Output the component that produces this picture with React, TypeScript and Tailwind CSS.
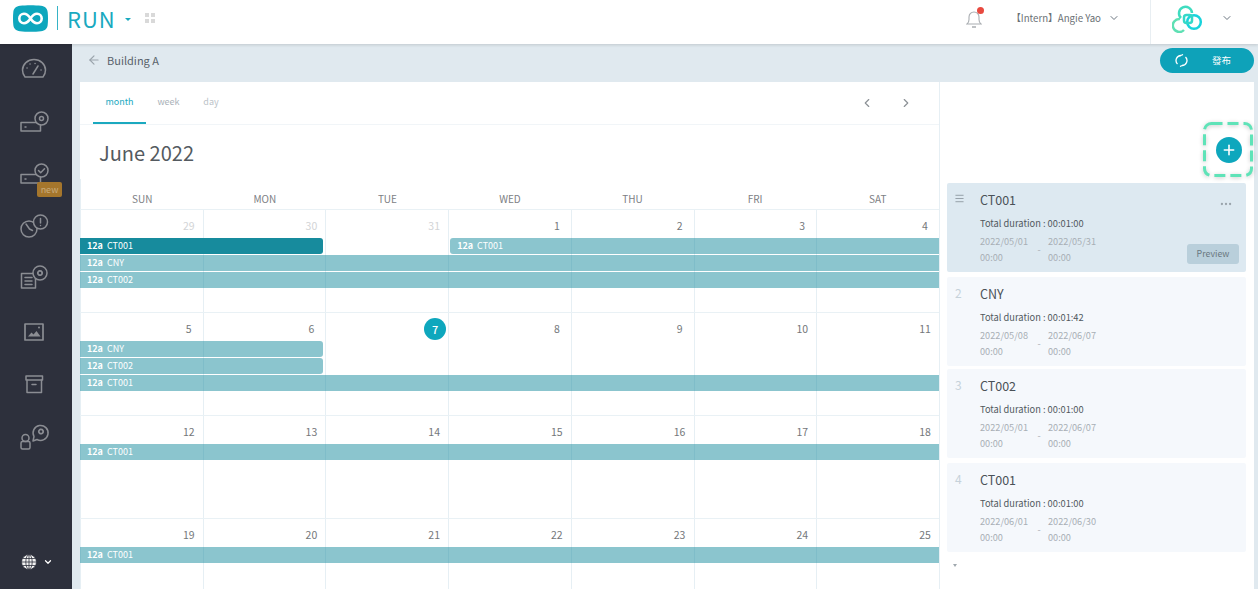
import { ChevronDown, ChevronLeft, ChevronRight, ArrowLeft, Plus, Ellipsis, Menu } from 'lucide-react';
import type { ReactNode } from 'react';

const FONT = 'font-["Noto_Sans_CJK_TC","Noto_Sans",sans-serif]';

const Ico = ({ children }: { children: ReactNode }) => (
  <svg width="32" height="32" viewBox="0 0 32 32" fill="none" stroke="#8b8d93" strokeWidth="1.5" strokeLinecap="round" strokeLinejoin="round">
    {children}
  </svg>
);

const Gear = ({ cx, cy, r = 7 }: { cx: number; cy: number; r?: number }) => (
  <>
    <circle cx={cx} cy={cy} r={r} fill="#2d303c" />
    <circle cx={cx} cy={cy} r={2.2} strokeWidth="1.8" strokeDasharray="1.6 0.6" />
  </>
);

const NAV_ICONS = [
  <Ico key="gauge">
    <path d="M7 24a11 11 0 0 1-2.500-7 11.500 10.500 0 0 1 23 0 11 11 0 0 1-2.500 7z" />
    <path d="M15 21l5-8M9 15h.1M12 11h.1M17 10.500h.1M23 17h.1" />
  </Ico>,
  <Ico key="device">
    <rect x="3" y="16.500" width="19.500" height="8.500" />
    <path d="M7 21h1" />
    <circle cx="23.500" cy="12.500" r="6.500" fill="#2d303c" />
    <circle cx="23.500" cy="12.500" r="2" />
  </Ico>,
  <Ico key="check">
    <rect x="3" y="16.500" width="19.500" height="8.500" />
    <path d="M7 21h1" />
    <circle cx="23.500" cy="12.500" r="6.500" fill="#2d303c" />
    <path d="M20.500 12.500l2.200 2.200 3.800-4" />
  </Ico>,
  <Ico key="alert">
    <circle cx="11" cy="18" r="8" />
    <path d="M8 13l3.500 5 3 1.500" />
    <circle cx="22.500" cy="11" r="7" fill="#2d303c" />
    <path d="M22.500 7.500v4.500M22.500 14.500v.1" />
  </Ico>,
  <Ico key="list">
    <rect x="3.500" y="10.500" width="14" height="14.500" fill="#2d303c" />
    <path d="M7 14.500h7M7 18h7M7 21.500h7" />
    <Gear cx={22} cy={10} />
  </Ico>,
  <Ico key="image">
    <rect x="7" y="8" width="18" height="16" strokeWidth="1.700" />
    <path d="M10 20.500l3.500-4 2 2 3-3.500 4 5.500z" fill="#8b8d93" stroke="none" />
    <circle cx="21" cy="11.500" r="1" fill="#8b8d93" stroke="none" />
  </Ico>,
  <Ico key="archive">
    <rect x="8" y="8" width="16.500" height="4" />
    <path d="M9 12v12.500h14.500V12M14 16.500h4" />
  </Ico>,
  <Ico key="user">
    <circle cx="7.500" cy="17" r="3.500" />
    <rect x="3" y="20.500" width="9" height="7.500" rx="1.500" />
    <path d="M16 15.500a7.500 7.500 0 1 1 3 3l-4 1.500z" />
    <circle cx="23" cy="10.500" r="2.200" strokeDasharray="1.600 0.600" strokeWidth="1.800" />
  </Ico>,
];

const DAYS = ['SUN', 'MON', 'TUE', 'WED', 'THU', 'FRI', 'SAT'];
const COL_STARTS = ['col-start-1', 'col-start-2', 'col-start-3', 'col-start-4', 'col-start-5', 'col-start-6', 'col-start-7'];

type CalEvent = { name: string; pos: string; round?: string; dark?: boolean };

const WEEKS: { dates: number[]; muted: number[]; today?: number; events: CalEvent[] }[] = [
  {
    dates: [29, 30, 31, 1, 2, 3, 4],
    muted: [29, 30, 31],
    events: [
      { name: 'CT001', pos: 'row-start-2 col-start-1 col-span-2', round: 'rounded-r-[3px] mr-[2px]', dark: true },
      { name: 'CT001', pos: 'row-start-2 col-start-4 col-span-4', round: 'rounded-l-[3px] ml-[2px]' },
      { name: 'CNY', pos: 'row-start-3 col-start-1 col-span-7' },
      { name: 'CT002', pos: 'row-start-4 col-start-1 col-span-7' },
    ],
  },
  {
    dates: [5, 6, 7, 8, 9, 10, 11],
    muted: [],
    today: 7,
    events: [
      { name: 'CNY', pos: 'row-start-2 col-start-1 col-span-2', round: 'rounded-r-[3px] mr-[2px]' },
      { name: 'CT002', pos: 'row-start-3 col-start-1 col-span-2', round: 'rounded-r-[3px] mr-[2px]' },
      { name: 'CT001', pos: 'row-start-4 col-start-1 col-span-7' },
    ],
  },
  {
    dates: [12, 13, 14, 15, 16, 17, 18],
    muted: [],
    events: [{ name: 'CT001', pos: 'row-start-2 col-start-1 col-span-7' }],
  },
  {
    dates: [19, 20, 21, 22, 23, 24, 25],
    muted: [],
    events: [{ name: 'CT001', pos: 'row-start-2 col-start-1 col-span-7' }],
  },
];

const CARDS = [
  { no: 1, name: 'CT001', dur: '00:01:00', from: '2022/05/01', to: '2022/05/31', active: true, gap: '' },
  { no: 2, name: 'CNY', dur: '00:01:42', from: '2022/05/08', to: '2022/06/07', gap: 'mt-[5px]' },
  { no: 3, name: 'CT002', dur: '00:01:00', from: '2022/05/01', to: '2022/06/07', gap: 'mt-[3px]' },
  { no: 4, name: 'CT001', dur: '00:01:00', from: '2022/06/01', to: '2022/06/30', gap: 'mt-[5px]' },
];

function Header() {
  return (
    <header className="relative z-10 flex h-[44px] shrink-0 items-stretch bg-white shadow-[0_1px_3px_rgba(0,0,0,0.14)]">
      <div className="flex items-center pb-[8px]">
        <svg className="ml-[13px]" width="35" height="27" viewBox="0 0 35 27">
          <path d="M7 .8C13 0 22 0 28 .8c4 .5 6.500 2.700 6.700 6.500.4 4 .4 8.400 0 12.400-.2 3.800-2.700 6-6.700 6.500-6 .8-15 .8-21 0-4-.5-6.500-2.700-6.700-6.500-.4-4-.4-8.400 0-12.400C.5 3.500 3 1.300 7 .8z" fill="#0ea7bd" />
          <path d="M17.500 13.500c-2-3-4-4.700-6.500-4.700a4.700 4.700 0 0 0 0 9.400c2.500 0 4.500-1.700 6.500-4.700 2-3 4-4.700 6.500-4.700a4.700 4.700 0 0 1 0 9.400c-2.500 0-4.500-1.700-6.500-4.700z" fill="none" stroke="#fff" strokeWidth="2.600" />
        </svg>
        <div className="ml-[9px] h-[24px] w-px bg-[#36b3c6]" />
        <span className="ml-[9px] text-[22px] leading-none font-normal tracking-[1px] text-[#1aa9bf]">RUN</span>
        <span className="mt-[3px] ml-[9px] h-0 w-0 border-x-[3.5px] border-t-[3.5px] border-x-transparent border-t-[#1aa9bf]" />
        <div className="ml-[14px] grid grid-cols-2 gap-[1.500px]">
          <span className="h-[4.500px] w-[4.500px] bg-[#d9d9d9]" />
          <span className="h-[4.500px] w-[4.500px] bg-[#d9d9d9]" />
          <span className="h-[4.500px] w-[4.500px] bg-[#d9d9d9]" />
          <span className="h-[4.500px] w-[4.500px] bg-[#d9d9d9]" />
        </div>
      </div>

      <div className="ml-auto flex items-center pb-[8px]">
        <div className="relative mt-[1px] h-[20px] w-[16px]">
          <svg width="16" height="20" viewBox="0 0 16 20" fill="none" stroke="#a9adb1" strokeWidth="1.100">
            <path d="M1 15h14c-1.500-1-2-2.500-2-4.500V8a5 5 0 0 0-10 0v2.500C3 12.500 2.500 14 1 15z" />
            <path d="M6 18h4" strokeWidth="1.500" />
          </svg>
          <span className="absolute -top-[2px] right-[-2px] h-[7px] w-[7px] rounded-full bg-[#e8493f]" />
        </div>
        <span className="ml-[29px] w-[90px] text-right text-[9.700px] whitespace-nowrap text-[#6b7075]">【Intern】Angie Yao</span>
        <ChevronDown className="ml-[7px]" size={12} color="#6b7580" />
      </div>
      <div className="ml-[30px] h-full w-px bg-[#e8eef2]" />
      <div className="flex items-center pb-[8px]">
        <svg className="ml-[21px]" width="31" height="29" viewBox="0 0 31 29" fill="none" strokeWidth="2.500">
          <path d="M8 15a6.500 6.500 0 1 0 4 11" stroke="#5fe0b4" />
          <path d="M9 14a6.500 6.500 0 1 1 11-5" stroke="#3fdcc0" />
          <circle cx="22" cy="18" r="6.800" stroke="#18d3dc" />
          <rect x="12" y="11" width="8" height="8" rx="2.500" stroke="#35d8c8" />
        </svg>
        <ChevronDown className="ml-[18px]" size={12} color="#6b7580" />
        <div className="w-[25px]" />
      </div>
    </header>
  );
}

function Sidebar() {
  return (
    <aside className="flex w-[72px] shrink-0 flex-col items-center bg-[#2d303c]">
      <div className="-mt-px flex flex-col items-center">
        {NAV_ICONS.map((icon, i) => (
          <div key={i} className="relative flex h-[52.500px] w-[72px] items-center justify-center pr-[4px]">
            {icon}
            {i === 2 && (
              <span className="absolute top-[34px] left-[37px] flex h-[15px] w-[25px] items-center justify-center rounded-[2px] bg-[#a5762c] text-[9px] text-[#c9ac7c]">new</span>
            )}
          </div>
        ))}
      </div>
      <div className="mt-auto mb-[19px] flex items-center gap-[6px] pl-[1px]">
        <svg width="16" height="16" viewBox="0 0 16 16" fill="#f2f2f2" stroke="#2d303c" strokeWidth="0.8">
          <circle cx="8" cy="8" r="7.500" />
          <ellipse cx="8" cy="8" rx="3.200" ry="7.300" fill="none" />
          <path d="M8 .7v14.600M.7 8h14.600M1.700 4.500h12.600M1.700 11.500h12.600" fill="none" />
        </svg>
        <ChevronDown size={10} color="#fff" strokeWidth={3} />
      </div>
    </aside>
  );
}

function Calendar() {
  return (
    <section className="flex w-[860px] shrink-0 flex-col border-r border-[#e6eff4]">
      <div className="flex h-[43px] shrink-0 items-stretch border-b border-[#f1f5f8] pl-[13px] text-[9px]">
        <span className="flex w-[53px] items-center justify-center border-b-2 border-[#1ba9bf] text-[#1ba9bf]">month</span>
        <span className="flex w-[45px] items-center justify-center pb-[2px] text-[#a9b1b8]">week</span>
        <span className="flex w-[40px] items-center justify-center pb-[2px] text-[#bcc3c9]">day</span>
        <div className="mr-[26px] ml-auto flex items-center gap-[25px] pb-[1px]">
          <ChevronLeft size={14} color="#8c9196" />
          <ChevronRight size={14} color="#8c9196" />
        </div>
      </div>
      <h1 className="h-[54px] shrink-0 pt-[11px] pl-[19px] text-[20px] leading-[33px] text-[#545a60]">June 2022</h1>
      <div className="grid h-[30px] shrink-0 grid-cols-7 border-l border-[#e6eff4]">
        {DAYS.map((d) => (
          <span key={d} className="flex items-end justify-center pb-[3px] text-[10px] text-[#7d8084]">{d}</span>
        ))}
      </div>
      {WEEKS.map((w, wi) => (
        <div key={wi} className="grid h-[103px] shrink-0 grid-cols-7 grid-rows-[28px_17px_17px_17px_1fr] border-t border-[#e9f1f5]">
          {w.dates.map((d, i) => (
            <div key={d} className={`${COL_STARTS[i]} row-start-1 row-end-6 flex justify-end border-l border-[#e6eff4] pr-[7px]`}>
              {w.today === d ? (
                <span className="mt-[5px] mr-[-7px] flex h-[22px] w-[22px] -translate-x-[2px] items-center justify-center rounded-full bg-[#0ea7bd] text-[11px] font-medium text-white">{d}</span>
              ) : (
                <span className={`mt-[6px] h-[20px] min-w-[14px] text-center text-[10.500px] leading-[20px] ${w.muted.includes(d) ? 'text-[#d2d4d6]' : 'text-[#74777a]'}`}>{d}</span>
              )}
            </div>
          ))}
          {w.events.map((e, i) => (
            <div
              key={i}
              className={`${e.pos} ${e.round ?? ''} ${e.dark ? 'bg-[#178b9d]' : 'bg-[#178b9d]/50'} z-[1] mb-px flex items-center gap-[4px] pb-px pl-[7px] text-[9px] leading-none text-white`}
            >
              <b className="font-bold">12a</b>
              <span>{e.name}</span>
            </div>
          ))}
        </div>
      ))}
    </section>
  );
}

function Playlist() {
  return (
    <section className="relative flex min-w-0 flex-1 flex-col pt-[101px] pr-[8px] pl-[7px]">
      <div className="absolute top-[40px] right-[1px] flex h-[55px] w-[50px] items-center justify-center pl-[2px]">
        <svg className="absolute inset-0 drop-shadow-[0_1px_2px_rgba(0,0,0,0.22)]" width="50" height="55" viewBox="0 0 50 55" fill="none">
          <rect x="1.500" y="1.500" width="47" height="52" rx="7" stroke="#5fe3b8" strokeWidth="3" strokeDasharray="11 5" />
        </svg>
        <span className="relative flex h-[26px] w-[26px] items-center justify-center rounded-full bg-[#0ea7bd]">
          <Plus size={16} color="#fff" strokeWidth={2.4} />
        </span>
      </div>
      <div className="flex flex-col">
        {CARDS.map((c) => (
          <div key={c.no} className={`relative flex h-[89px] rounded-[2px] ${c.gap} ${c.active ? 'bg-[#dde9f1]' : 'bg-[#f5f8fc]'}`}>
            <div className="w-[33px] shrink-0 pt-[7px] pl-[7px] text-[12px] text-[#c6d2da]">
              {c.active ? <Menu size={11} color="#8f9aa3" className="mt-[3px]" /> : <span className="pl-[1px]">{c.no}</span>}
            </div>
            <div className="flex flex-col">
              <span className="mt-[6px] text-[12.500px] leading-[22px] text-[#4a5157]">{c.name}</span>
              <span className="mt-[4px] text-[9.300px] leading-[16px] text-[#51585e]">Total duration : {c.dur}</span>
              <div className="mt-[2px] flex text-[9.200px] leading-[16px] text-[#a8afb5]">
                <div className="w-[50px]">{c.from}<br />00:00</div>
                <span className="mt-[8px] w-[18px] text-center">-</span>
                <div>{c.to}<br />00:00</div>
              </div>
            </div>
            {c.active && (
              <>
                <Ellipsis className="absolute top-[14px] right-[13px]" size={14} color="#9aa4ac" />
                <span className="absolute right-[7px] bottom-[8px] flex h-[20px] w-[52px] items-center justify-center rounded-[3px] bg-[#b9cfdb] text-[8.800px] text-[#6a7780]">Preview</span>
              </>
            )}
          </div>
        ))}
      </div>
      <span className="mt-[12px] ml-[6px] h-0 w-0 border-x-[2.500px] border-t-[3px] border-x-transparent border-t-[#a0a8ae]" />
    </section>
  );
}

export default function App() {
  return (
    <div className={`flex h-screen w-full flex-col overflow-hidden bg-[#e0e9ef] ${FONT}`}>
      <Header />
      <div className="flex min-h-0 flex-1">
        <Sidebar />
        <main className="flex min-w-0 flex-1 flex-col pr-[4px] pl-[8px]">
          <div className="flex h-[38px] shrink-0 items-center pb-[6px]">
            <ArrowLeft className="ml-[7px]" size={14} color="#9aa3ab" />
            <span className="ml-[6px] text-[11px] text-[#59626b]">Building A</span>
            <button className="mt-[1px] ml-auto flex h-[25px] w-[94px] items-center rounded-full bg-[#0ea2b9] pl-[15px] text-[9.500px] text-white">
              <svg width="13" height="13" viewBox="0 0 13 13" fill="none" stroke="#fff" strokeWidth="1.300">
                <path d="M2.500 10A5 5 0 0 1 6 1.500M10.500 3A5 5 0 0 1 7 11.500" />
                <path d="M6 1.500L8 0.500M7 11.500L5 12.500" />
              </svg>
              <span className="ml-[24px]">發布</span>
            </button>
          </div>
          <div className="flex min-h-0 flex-1 bg-white">
            <Calendar />
            <Playlist />
          </div>
        </main>
      </div>
    </div>
  );
}
